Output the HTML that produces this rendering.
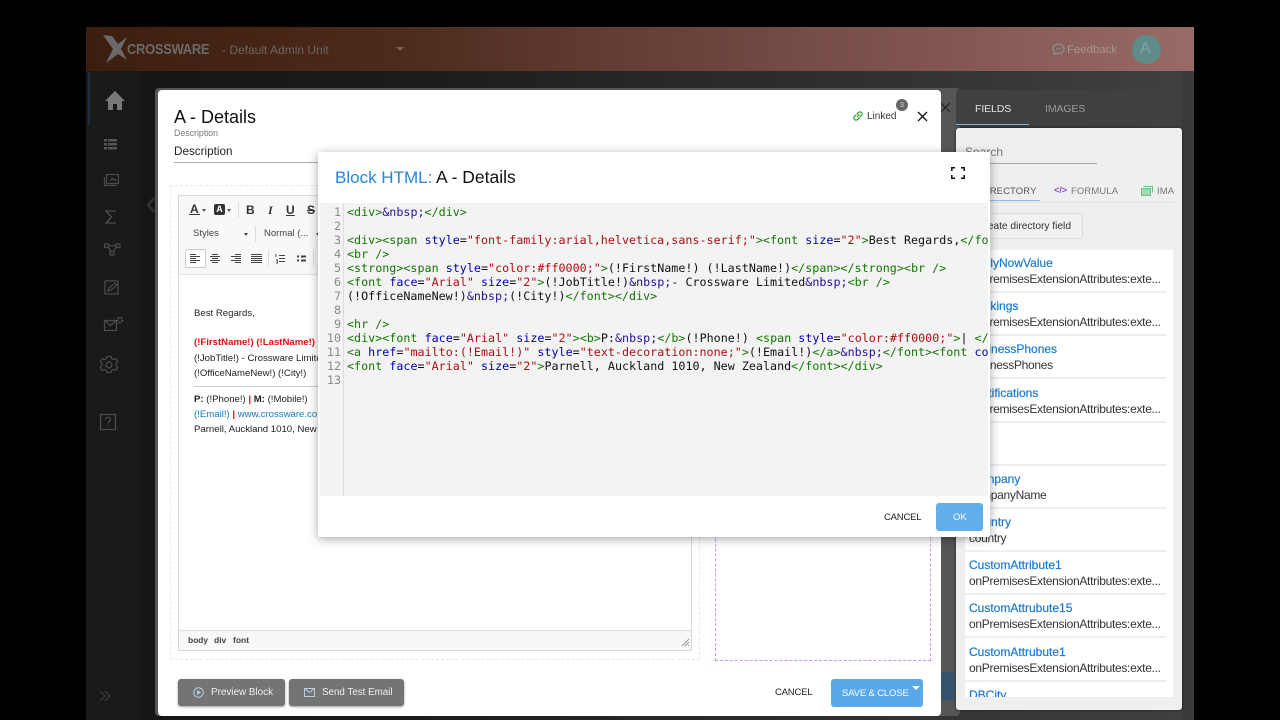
<!DOCTYPE html>
<html><head><meta charset="utf-8"><title>Block HTML</title>
<style>
*{box-sizing:border-box}
html,body{margin:0;padding:0;width:1280px;height:720px;overflow:hidden;background:#000;font-family:"Liberation Sans",sans-serif}
.a{position:absolute}
.t{position:absolute;white-space:nowrap;line-height:1}
svg{position:absolute;overflow:visible}
.code{position:absolute;left:347px;top:205px;width:641px;height:291px;overflow:hidden;font:11.7px/14px "DejaVu Sans Mono",monospace;color:#111;white-space:pre;letter-spacing:.012px}
.code i{font-style:normal;color:#170}.code b{font-weight:normal;color:#00a}.code u{text-decoration:none;color:#a11}.code s{text-decoration:none;color:#219}
.nums{position:absolute;left:320px;top:205px;width:21px;text-align:right;font:11.7px/14px "DejaVu Sans Mono",monospace;color:#8a8a8a;white-space:pre}
.it{position:absolute;left:9px;width:201px;height:43px;background:#fff;border-bottom:2px solid #eee}
.it p{position:absolute;left:4px;margin:0;white-space:nowrap;line-height:1}
.it .h{top:7px;font-size:12px;color:#1a7ad0;-webkit-text-stroke:.2px #1a7ad0}
.it .s{top:23px;font-size:12px;color:#333;letter-spacing:-.3px}
.p{font-size:9.6px;color:#222;position:absolute;left:194px;white-space:nowrap;line-height:1}
</style></head><body>

<!-- app -->
<div class="a" style="left:86px;top:27px;width:1108px;height:693px;background:linear-gradient(90deg,#141414 0,#1c1c1c 30%,#333 75%,#414141 100%)"></div>
<div class="a" style="left:86px;top:27px;width:1108px;height:44px;background:linear-gradient(90deg,#3c1e0f 0,#4d2a1c 28%,#734943 62%,#976b67 100%)"></div>
<div class="a" style="left:86px;top:71px;width:55px;height:649px;background:#191919"></div>
<div class="a" style="left:88px;top:72px;width:2px;height:53px;background:#1d2c3f"></div>
<div class="a" style="left:1182px;top:71px;width:12px;height:649px;background:#3a3a3a"></div>

<!-- logo -->
<svg style="left:0;top:0" width="1280" height="72">
<path d="M103 35L112 36L118 44L127 37L121 49L127 60L118 54L106 63L113 49Z" fill="#6a6a6a"/>
</svg>
<div class="t" style="left:127px;top:42px;font-size:15px;font-weight:bold;color:#6a6a6a;transform:scaleX(.86);transform-origin:0 0;letter-spacing:-.3px">CROSSWARE</div>
<div class="t" style="left:222px;top:44px;font-size:12px;color:#6d655f">- Default Admin Unit</div>
<div class="a" style="left:396px;top:47px;border:4px solid transparent;border-top:4px solid #6f625c"></div>
<svg style="left:1052px;top:43px" width="13" height="13" viewBox="0 0 13 13"><path d="M6.500 1C3.500 1 1 3 1 5.600c0 1.300.6 2.400 1.600 3.200L2 11.500l2.800-1.300c.5.1 1.100.2 1.700.2 3 0 5.500-2 5.500-4.800S9.500 1 6.500 1z" fill="none" stroke="#8b9a9a" stroke-width="1"/><path d="M4 5.800h1M6 5.800h1M8 5.800h1" stroke="#8b9a9a"/></svg>
<div class="t" style="left:1067px;top:45px;font-size:11.400px;color:#a8928f">Feedback</div>
<div class="a" style="left:1132px;top:35px;width:29px;height:29px;border-radius:50%;background:#5f8b89"></div>
<div class="t" style="left:1140px;top:41px;font-size:16px;color:#82a5a3">A</div>

<!-- sidebar icons -->
<svg style="left:0;top:0" width="160" height="720" fill="none" stroke="#4c4c4c" stroke-width="1.200">
<path d="M115 91 L125 101 L122 101 L122 110 L117 110 L117 104 L113 104 L113 110 L108 110 L108 101 L105 101Z" fill="#787878" stroke="none"/>
<path d="M104 139h3v2.500h-3zM108 139h9v2.500h-9zM104 143h3v2.500h-3zM108 143h9v2.500h-9zM104 147h3v2.500h-3zM108 147h9v2.500h-9z" fill="#555" stroke="none"/>
<path d="M106.500 174.500h12v9h-12zM104.500 177v8.500h12M110 181l2-2.500 1.500 1.500 1-1 2 2"/>
<path d="M116 211h-10l5.500 6-5.500 6h10" stroke-width="1.300"/>
<path d="M104.500 244h4v3.500h-4zM116 244h4v3.500h-4zM110 251.500h4v3.500h-4zM108.500 247.500l2.500 4M116 247.500l-2.500 4M108.500 245.700h7.500"/>
<path d="M105 281h13v13h-13zM108 291l1-3 6-5 2 2-6 5z"/>
<path d="M104.500 320.500h12v10h-12zM104.500 320.500l6 5 6-5"/>
<circle cx="120" cy="320" r="2.500" stroke-width="2" stroke-dasharray="2 1"/>
<circle cx="109" cy="365" r="3"/>
<path d="M107 356.500h4l.7 2.200 2.100.9 2-1.100 2 3.300-1.700 1.500v2.400l1.700 1.500-2 3.300-2-1.100-2.100.9-.7 2.200h-4l-.7-2.200-2.100-.9-2 1.100-2-3.300 1.700-1.500v-2.400l-1.700-1.500 2-3.300 2 1.100 2.100-.9z"/>
<path d="M100.500 414.500h15v15h-15z"/><path d="M105.500 419.500c0-3 5-3 5 0 0 2-2.500 2-2.500 4M108 425v1.500"/>
<path d="M100 691l5 5-5 5M105 691l5 5-5 5" stroke="#3f3f3f"/>
<path d="M154 198l-6 7 6 7" stroke="#333" stroke-width="2.500"/>
</svg>

<!-- behind modal -->
<div class="a" style="left:155px;top:88px;width:805px;height:628px;background:#565656;border-radius:4px"></div>
<svg style="left:941px;top:103px" width="10" height="10"><path d="M0 0L9 9M9 0L0 9" stroke="#222" stroke-width="1.200"/></svg>
<div class="a" style="left:941px;top:672px;width:13px;height:28px;background:#33536f"></div>

<!-- right panel -->
<div class="a" style="left:956px;top:90px;width:226px;height:36px;background:#404040;border-radius:3px 3px 0 0"></div>
<div class="t" style="left:975px;top:104px;font-size:10.500px;letter-spacing:-.1px;color:#e4e4e4">FIELDS</div>
<div class="t" style="left:1045px;top:104px;font-size:10.500px;letter-spacing:-.1px;color:#9a9a9a">IMAGES</div>
<div class="a" style="left:956px;top:124px;width:73px;height:1px;background:#7fb2d6"></div>
<div class="a" style="left:956px;top:128px;width:226px;height:582px;background:#efefef;border-radius:3px;box-shadow:0 0 3px #222"></div>
<div class="t" style="left:965px;top:146px;font-size:12px;color:#777">Search</div>
<div class="a" style="left:965px;top:163px;width:132px;height:1px;background:#aaa"></div>
<div class="t" style="left:980px;top:187px;font-size:9.500px;letter-spacing:.1px;color:#555">DIRECTORY</div>
<div class="a" style="left:965px;top:200px;width:75px;height:1px;background:#8fbde0"></div>
<div class="a" style="left:965px;top:202px;width:210px;height:1px;background:#e2e2e2"></div>
<div class="t" style="left:1054px;top:186px;font-size:9px;font-weight:bold;color:#8a4fd0">&lt;/&gt;</div>
<div class="t" style="left:1071px;top:187px;font-size:9.500px;letter-spacing:.1px;color:#777">FORMULA</div>
<svg style="left:1141px;top:186px" width="12" height="10"><path d="M.500 2.500h9v7h-9z" fill="#a5d9b5" stroke="#6cc28a"/><path d="M2.500.500h9v6" fill="none" stroke="#6cc28a"/></svg>
<div class="a" style="left:1155px;top:185px;width:20px;height:13px;overflow:hidden"><div class="t" style="left:2px;top:2px;font-size:9.500px;letter-spacing:.1px;color:#777">IMAGES</div></div>
<div class="a" style="left:960px;top:213px;width:123px;height:26px;background:#f1f1f1;border:1px solid #ddd;border-radius:3px"></div>
<div class="t" style="left:977px;top:222px;font-size:10.200px;color:#333">Create directory field</div>

<div class="a" style="left:965px;top:250px;width:208px;height:447px;background:#fff"></div>
<div class="a" style="left:956px;top:250px;width:226px;height:447px;overflow:hidden">
<div class="it" style="top:0"><p class="h">ApplyNowValue</p><p class="s">onPremisesExtensionAttributes:exte...</p></div>
<div class="it" style="top:43px"><p class="h">Bookings</p><p class="s">onPremisesExtensionAttributes:exte...</p></div>
<div class="it" style="top:86px"><p class="h">businessPhones</p><p class="s">businessPhones</p></div>
<div class="it" style="top:130px"><p class="h">Certifications</p><p class="s">onPremisesExtensionAttributes:exte...</p></div>
<div class="it" style="top:173px"><p class="h">City</p><p class="s">city</p></div>
<div class="it" style="top:216px"><p class="h">Company</p><p class="s">companyName</p></div>
<div class="it" style="top:259px"><p class="h">Country</p><p class="s">country</p></div>
<div class="it" style="top:302px"><p class="h">CustomAttribute1</p><p class="s">onPremisesExtensionAttributes:exte...</p></div>
<div class="it" style="top:345px"><p class="h">CustomAttrubute15</p><p class="s">onPremisesExtensionAttributes:exte...</p></div>
<div class="it" style="top:389px"><p class="h">CustomAttrubute1</p><p class="s">onPremisesExtensionAttributes:exte...</p></div>
<div class="it" style="top:432px"><p class="h">DBCity</p></div>
</div>

<!-- modal -->
<div class="a" style="left:158px;top:90px;width:783px;height:626px;background:#fff;border-radius:4px"></div>
<div class="t" style="left:174px;top:108px;font-size:18px;color:#111">A - Details</div>
<div class="t" style="left:174px;top:129px;font-size:8.800px;color:#777">Description</div>
<div class="t" style="left:174px;top:146px;font-size:11.700px;color:#222">Description</div>
<div class="a" style="left:174px;top:162px;width:150px;height:1px;background:#aaa"></div>
<svg style="left:852px;top:110px" width="12" height="12" viewBox="0 0 12 12"><path d="M5 7l2.500-2.500M4.500 4.500l2-2a2 2 0 0 1 3 3l-1.500 1.500M7.500 7.500l-2 2a2 2 0 0 1-3-3l1.500-1.500" fill="none" stroke="#35a836" stroke-width="1.300"/></svg>
<div class="t" style="left:867px;top:112px;font-size:10px;color:#333">Linked</div>
<div class="a" style="left:896px;top:99px;width:12px;height:12px;border-radius:50%;background:#666"></div>
<div class="t" style="left:900px;top:102px;font-size:7px;color:#ddd">3</div>
<svg style="left:918px;top:112px" width="9" height="9"><path d="M0 0L9 9M9 0L0 9" stroke="#111" stroke-width="1.300"/></svg>

<!-- editor -->
<div class="a" style="left:170px;top:185px;width:530px;height:475px;border:1px dashed #e8e8e8"></div>
<div class="a" style="left:178px;top:195px;width:514px;height:456px;border:1px solid #d8d8d8;background:#fff"></div>
<div class="a" style="left:179px;top:196px;width:512px;height:79px;background:#f8f8f8;border-bottom:1px solid #e2e2e2"></div>
<div class="a" style="left:179px;top:630px;width:512px;height:20px;background:#f8f8f8;border-top:1px solid #ddd"></div>
<div class="t" style="left:188px;top:636px;font-size:8.500px;font-weight:bold;color:#444;letter-spacing:-.1px">body</div>
<div class="t" style="left:214px;top:636px;font-size:8.500px;font-weight:bold;color:#444">div</div>
<div class="t" style="left:233px;top:636px;font-size:8.500px;font-weight:bold;color:#444">font</div>
<svg style="left:681px;top:638px" width="9" height="9"><path d="M8 1L1 8M8 4L4 8M8 7L7 8" stroke="#999"/></svg>

<div class="t" style="left:190px;top:203px;font-size:12px;color:#333;font-weight:bold">A</div>
<div class="a" style="left:189px;top:214px;width:11px;height:1px;background:#333"></div>
<div class="a" style="left:202px;top:209px;border:2px solid transparent;border-top:3px solid #555"></div>
<div class="a" style="left:214px;top:204px;width:11px;height:11px;background:#333;border-radius:2px;color:#fff;font-size:9px;line-height:11px;text-align:center;font-weight:bold">A</div>
<div class="a" style="left:227px;top:209px;border:2px solid transparent;border-top:3px solid #555"></div>
<div class="a" style="left:238px;top:202px;width:1px;height:16px;background:#ddd"></div>
<div class="t" style="left:246px;top:204px;font-size:12px;font-weight:bold;color:#333">B</div>
<div class="t" style="left:268px;top:204px;font-size:12px;font-style:italic;font-weight:bold;font-family:'Liberation Serif',serif;color:#333">I</div>
<div class="t" style="left:286px;top:204px;font-size:12px;font-weight:bold;color:#333;text-decoration:underline">U</div>
<div class="t" style="left:307px;top:204px;font-size:12px;font-weight:bold;color:#333;text-decoration:line-through">S</div>
<div class="t" style="left:193px;top:229px;font-size:9.500px;color:#444">Styles</div>
<div class="a" style="left:244px;top:233px;border:2px solid transparent;border-top:3px solid #444"></div>
<div class="a" style="left:255px;top:226px;width:1px;height:16px;background:#ddd"></div>
<div class="t" style="left:264px;top:229px;font-size:9.500px;color:#444">Normal (...</div>
<div class="a" style="left:316px;top:233px;border:2px solid transparent;border-top:3px solid #444"></div>
<div class="a" style="left:185px;top:249px;width:21px;height:19px;background:#fff;border:1px solid #ccc;border-radius:2px"></div>
<svg style="left:185px;top:250px" width="133" height="18" stroke="#444" stroke-width="1" fill="none">
<path d="M5 4.500h6M5 6.500h10M5 8.500h6M5 10.500h10M5 12.500h6"/>
<path d="M27 4.500h6M25 6.500h10M27 8.500h6M25 10.500h10M27 12.500h6"/>
<path d="M50 4.500h6M46 6.500h10M50 8.500h6M46 10.500h10M50 12.500h6"/>
<path d="M66 4.500h11M66 6.500h11M66 8.500h11M66 10.500h11M66 12.500h11"/>
<path d="M94 5.500h6M94 8.500h6M94 11.500h6M91 4v3M91 10h1.500v3h-1.500" stroke-width=".9"/>
<path d="M116 6.500h5M116 10.500h5M112 6.500h2M112 10.500h2" stroke-width="2"/>
<path d="M83.500 0v16M128.500 0v16" stroke="#ddd"/>
</svg>

<div class="p" style="top:309px">Best Regards,</div>
<div class="p" style="top:338px;color:#e01010;font-weight:bold">(!FirstName!) (!LastName!)</div>
<div class="p" style="top:354px">(!JobTitle!) - Crossware Limited</div>
<div class="p" style="top:369px">(!OfficeNameNew!) (!City!)</div>
<div class="a" style="left:194px;top:386px;width:124px;height:1px;background:#ccc"></div>
<div class="p" style="top:395px"><b>P:</b> (!Phone!) <b style="color:#e01010">|</b> <b>M:</b> (!Mobile!)</div>
<div class="p" style="top:410px;color:#1a7ab8">(!Email!) <b style="color:#e01010">|</b> www.crossware.co.nz</div>
<div class="p" style="top:425px">Parnell, Auckland 1010, New Zealand</div>

<!-- purple -->
<div class="a" style="left:715px;top:185px;width:216px;height:476px;border:1px dashed #c79be4"></div>

<!-- footer buttons -->
<div class="a" style="left:178px;top:679px;width:107px;height:27px;background:#747474;border-radius:3px;box-shadow:0 1px 2px #999"></div>
<svg style="left:193px;top:687px" width="11" height="11"><circle cx="5.500" cy="5.500" r="4.800" fill="none" stroke="#b8cfe0"/><path d="M4 3l4 2.500L4 8z" fill="#b8cfe0"/></svg>
<div class="t" style="left:211px;top:688px;font-size:9.900px;color:#eee">Preview Block</div>
<div class="a" style="left:289px;top:679px;width:115px;height:27px;background:#747474;border-radius:3px;box-shadow:0 1px 2px #999"></div>
<svg style="left:304px;top:688px" width="12" height="10"><path d="M.500.500h10v8h-10zM.500.500l5 4 5-4" fill="none" stroke="#b8cfe0"/></svg>
<div class="t" style="left:322px;top:688px;font-size:9.800px;color:#eee">Send Test Email</div>
<div class="t" style="left:775px;top:688px;font-size:9.500px;letter-spacing:-.2px;color:#222">CANCEL</div>
<div class="a" style="left:831px;top:679px;width:92px;height:28px;background:#5aa7ea;border-radius:3px"></div>
<div class="t" style="left:842px;top:689px;font-size:9.500px;letter-spacing:-.15px;color:#fff">SAVE &amp; CLOSE</div>
<div class="a" style="left:912px;top:686px;border:4px solid transparent;border-top:4px solid #fff"></div>

<!-- dialog -->
<div class="a" style="left:318px;top:152px;width:672px;height:385px;background:#fff;border-radius:2px;box-shadow:0 2px 10px rgba(0,0,0,.35)"></div>
<div class="t" style="left:335px;top:169px;font-size:17px;color:#2a85d8">Block HTML:</div>
<div class="t" style="left:436px;top:169px;font-size:17.500px;color:#111">A - Details</div>
<svg style="left:951px;top:167px" width="14" height="12" fill="none" stroke="#111" stroke-width="1.500"><path d="M4 .800H.800V4M10 .800h3.200V4M4 11.200H.800V8M10 11.200h3.200V8"/></svg>
<div class="a" style="left:320px;top:203px;width:668px;height:293px;background:#f3f3f3"></div>
<div class="a" style="left:343px;top:203px;width:1px;height:293px;background:#ddd"></div>
<div class="nums">1
2
3
4
5
6
7
8
9
10
11
12
13</div>
<div class="code"><i>&lt;div&gt;</i><s>&amp;nbsp;</s><i>&lt;/div&gt;</i>

<i>&lt;div&gt;&lt;span</i> <b>style</b>=<u>"font-family:arial,helvetica,sans-serif;"</u><i>&gt;&lt;font</i> <b>size</b>=<u>"2"</u><i>&gt;</i>Best Regards,<i>&lt;/font&gt;</i>
<i>&lt;br /&gt;</i>
<i>&lt;strong&gt;&lt;span</i> <b>style</b>=<u>"color:#ff0000;"</u><i>&gt;</i>(!FirstName!) (!LastName!)<i>&lt;/span&gt;&lt;/strong&gt;&lt;br /&gt;</i>
<i>&lt;font</i> <b>face</b>=<u>"Arial"</u> <b>size</b>=<u>"2"</u><i>&gt;</i>(!JobTitle!)<s>&amp;nbsp;</s>- Crossware Limited<s>&amp;nbsp;</s><i>&lt;br /&gt;</i>
(!OfficeNameNew!)<s>&amp;nbsp;</s>(!City!)<i>&lt;/font&gt;&lt;/div&gt;</i>

<i>&lt;hr /&gt;</i>
<i>&lt;div&gt;&lt;font</i> <b>face</b>=<u>"Arial"</u> <b>size</b>=<u>"2"</u><i>&gt;&lt;b&gt;</i>P:<s>&amp;nbsp;</s><i>&lt;/b&gt;</i>(!Phone!) <i>&lt;span</i> <b>style</b>=<u>"color:#ff0000;"</u><i>&gt;</i>| <i>&lt;/span&gt;</i>
<i>&lt;a</i> <b>href</b>=<u>"mailto:(!Email!)"</u> <b>style</b>=<u>"text-decoration:none;"</u><i>&gt;</i>(!Email!)<i>&lt;/a&gt;</i><s>&amp;nbsp;</s><i>&lt;/font&gt;&lt;font</i> <b>color</b>=<u>"#000"</u><i>&gt;</i>
<i>&lt;font</i> <b>face</b>=<u>"Arial"</u> <b>size</b>=<u>"2"</u><i>&gt;</i>Parnell, Auckland 1010, New Zealand<i>&lt;/font&gt;&lt;/div&gt;</i>
</div>
<div class="t" style="left:884px;top:513px;font-size:9.500px;letter-spacing:-.2px;color:#222">CANCEL</div>
<div class="a" style="left:936px;top:503px;width:47px;height:28px;background:#62aeea;border-radius:3px"></div>
<div class="t" style="left:953px;top:513px;font-size:9.500px;color:#fff">OK</div>
</body></html>
